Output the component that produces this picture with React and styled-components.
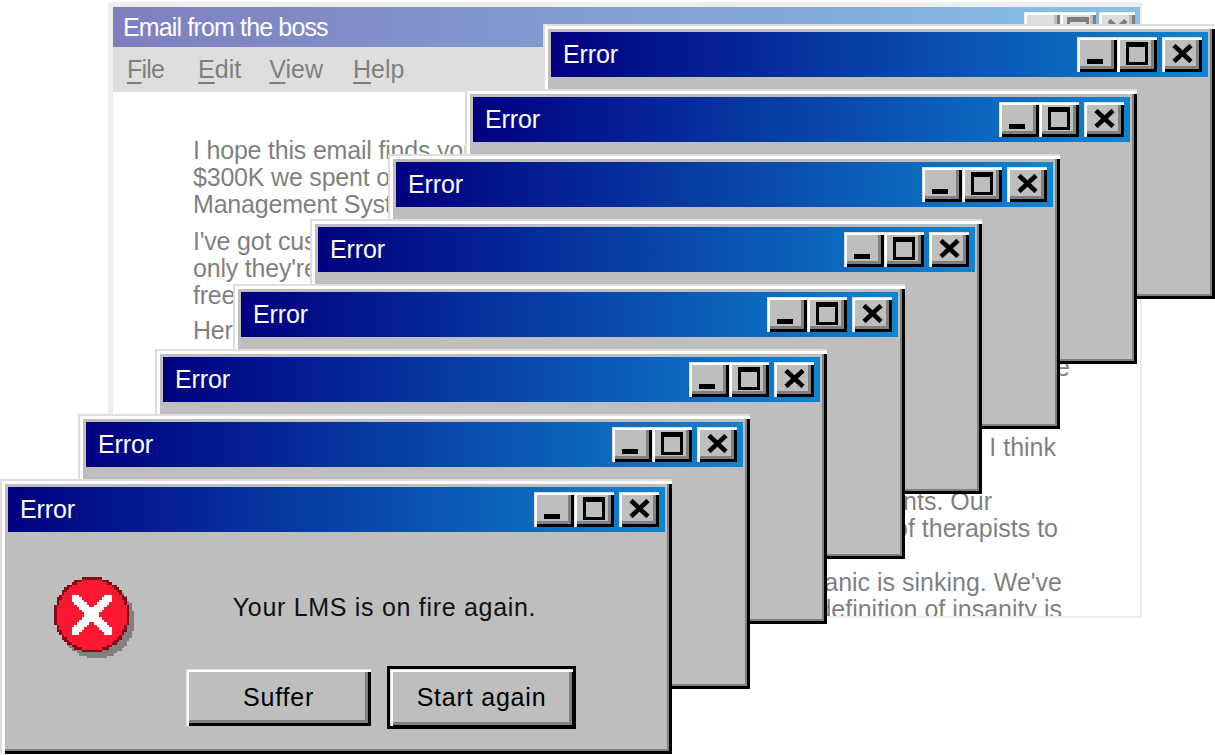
import React from "react";
import styled, { createGlobalStyle } from "styled-components";

const Global = createGlobalStyle`
  html, body {
    margin: 0;
    background: #fff;
  }
  body {
    font-family: "Liberation Sans", Arial, sans-serif;
  }
`;

const Desktop = styled.div`
  position: relative;
  width: 1215px;
  height: 755px;
  overflow: hidden;
  background: #fff;
`;

const Boss = styled.div`
  position: absolute;
  left: 108px;
  top: 2px;
  width: 1034px;
  height: 616px;
  box-sizing: border-box;
  display: flex;
  flex-direction: column;
  padding: 5px 2px 2px 5px;
  background: #dcdcdc;
  opacity: 0.5;
  overflow: hidden;
`;

const Win = styled.div`
  position: absolute;
  left: ${(p) => p.$x}px;
  top: ${(p) => p.$y}px;
  width: 672px;
  height: 275px;
  box-sizing: border-box;
  padding: 8px 7px 0 8px;
  background: #bebebe;
  box-shadow: inset 2px 2px 0 #dedede, inset 5px 5px 0 #fff, inset -3px -3px 0 #000,
    inset -5px -5px 0 #808080;
`;

const TitleBar = styled.div`
  height: ${(p) => p.$h}px;
  display: flex;
  align-items: center;
  justify-content: space-between;
  padding: 0 ${(p) => p.$end}px 0 ${(p) => p.$pad}px;
  background: linear-gradient(90deg, #000080, #1084d0);
`;

const TitleText = styled.span`
  color: #fff;
  font-size: 25px;
  line-height: 30px;
  letter-spacing: ${(p) => p.$track}px;
  margin-bottom: ${(p) => p.$lift || 0}px;
`;

const Controls = styled.div`
  display: flex;
  align-items: center;
  margin-top: ${(p) => p.$drop || 0}px;
`;

const Bevel = styled.button`
  display: flex;
  align-items: center;
  justify-content: center;
  padding: 0;
  border: 0;
  background: #bebebe;
  color: #000;
  font-family: "Liberation Sans", Arial, sans-serif;
  box-shadow: inset 1px 1px 0 #dedede, inset 3px 3px 0 #fff, inset -3px -3px 0 #000,
    inset -6px -6px 0 #808080;
`;

const Ctl = styled(Bevel)`
  width: ${(p) => p.$w}px;
  height: 35px;
  padding-bottom: 2px;
  margin-left: ${(p) => p.$gap || 0}px;
`;

const Menu = styled.div`
  height: 45px;
  display: flex;
  align-items: center;
  padding-left: 14px;
  background: #bebebe;
  font-size: 25px;
  color: #000;
`;

const MenuItem = styled.span`
  margin-left: ${(p) => p.$lead || 0}px;
  letter-spacing: ${(p) => p.$track || 0}px;
  &::first-letter {
    text-decoration: underline;
    text-underline-offset: 4px;
  }
`;

const Mail = styled.div`
  flex: 1;
  background: #fff;
  padding: 45px 70px 0 80px;
  font-size: 25px;
  line-height: 27px;
  color: #000;
  overflow: hidden;
`;

const Para = styled.p`
  margin: 0 0 ${(p) => p.$after}px;
  white-space: nowrap;
  letter-spacing: -0.2px;
`;

const Tail = styled.p`
  margin: 0;
  text-align: right;
  white-space: nowrap;
  padding-right: ${(p) => p.$inset || 0}px;
  margin-top: ${(p) => p.$skip || 0}px;
`;

const Content = styled.div`
  display: flex;
  align-items: flex-start;
  padding: 45px 30px 0 46px;
`;

const Message = styled.div`
  flex: 1;
  margin-top: 15px;
  text-align: center;
  font-size: 25px;
  line-height: 30px;
  color: #111;
  letter-spacing: 0.7px;
`;

const Actions = styled.div`
  display: flex;
  align-items: center;
  gap: 16px;
  margin-top: 8px;
  padding-left: 178px;
`;

const Action = styled(Bevel)`
  width: 185px;
  height: 57px;
  font-size: 25px;
  letter-spacing: 0.8px;
`;

const DefaultAction = styled(Action)`
  width: 189px;
  height: 63px;
  box-shadow: inset 0 0 0 3px #000, inset 4px 4px 0 #dedede, inset 6px 6px 0 #fff,
    inset -4px -4px 0 #000, inset -7px -7px 0 #808080;
`;

const MinIcon = () => (
  <svg width="20" height="26" viewBox="0 0 20 26" shapeRendering="crispEdges">
    <rect x="0" y="18" width="16" height="5" fill="#000" />
  </svg>
);

const MaxIcon = () => (
  <svg width="22" height="23" viewBox="0 0 22 23" shapeRendering="crispEdges">
    <path d="M0 0H22V23H0Z M3 5V20H19V5Z" fill="#000" fillRule="evenodd" />
  </svg>
);

const CloseIcon = () => (
  <svg width="21" height="19" viewBox="0 0 21 19">
    <path d="M2 1.5 L19 17.5 M19 1.5 L2 17.5" stroke="#000" strokeWidth="4.6" fill="none" />
  </svg>
);

const Buttons = ({ w = 40, gap = 5, drop }) => (
  <Controls $drop={drop}>
    <Ctl $w={w}><MinIcon /></Ctl>
    <Ctl $w={w}><MaxIcon /></Ctl>
    <Ctl $w={w} $gap={gap}><CloseIcon /></Ctl>
  </Controls>
);

// the stop icon is chunky pixels in the picture, so it is built on a grid
const cells = [];
for (let row = 0; row < 30; row++) {
  for (let col = 0; col < 30; col++) {
    const dx = col - 14.5;
    const dy = row - 14.5;
    const dist = Math.hypot(dx, dy);
    if (dist > 15) continue;
    let fill = "#fb1830";
    if (dist > 14) fill = "#860a14";
    if (Math.abs(Math.abs(dx) - Math.abs(dy)) < 3 && Math.abs(dx) < 8.5 && Math.abs(dy) < 8.5) fill = "#fff";
    cells.push({ row, col, fill });
  }
}

const StopIcon = () => (
  <svg width="80" height="81" viewBox="0 0 32 32.4" shapeRendering="crispEdges">
    {cells.map((c) => (
      <rect key={"s" + c.row + "-" + c.col} x={c.col + 2} y={c.row + 2.4} width="1" height="1" fill="#808080" />
    ))}
    {cells.map((c) => (
      <rect key={c.row + "-" + c.col} x={c.col} y={c.row} width="1.02" height="1.02" fill={c.fill} />
    ))}
  </svg>
);

const ErrorTitle = () => (
  <TitleBar $h={45} $pad={12} $end={6}>
    <TitleText $track={-0.1} $lift={2}>Error</TitleText>
    <Buttons />
  </TitleBar>
);

const backWindows = [7, 6, 5, 4, 3, 2, 1];

export default function App() {
  return (
    <Desktop>
      <Global />
      <Boss>
        <TitleBar $h={40} $pad={10} $end={5}>
          <TitleText $track={-0.85}>Email from the boss</TitleText>
          <Buttons w={36} gap={3} drop={4} />
        </TitleBar>
        <Menu>
          <MenuItem $track={-0.8}>File</MenuItem>
          <MenuItem $lead={34}>Edit</MenuItem>
          <MenuItem $lead={28}>View</MenuItem>
          <MenuItem $lead={30}>Help</MenuItem>
        </Menu>
        <Mail>
          <Para $after={10}>
            I hope this email finds you
            <br />
            $300K we spent on
            <br />
            Management System
          </Para>
          <Para $after={8}>
            I've got customers
            <br />
            only they're
            <br />
            free
          </Para>
          <Para $after={0}>Here</Para>
          <Tail $skip={10}>e</Tail>
          <Tail $skip={53} $inset={14}>I think</Tail>
          <Tail $skip={27} $inset={78}>ents. Our</Tail>
          <Tail $inset={12}>of therapists to</Tail>
          <Tail $skip={27} $inset={8}>tanic is sinking. We've</Tail>
          <Tail $inset={8}>definition of insanity is</Tail>
        </Mail>
      </Boss>
      {backWindows.map((n) => (
        <Win key={n} $x={Math.round(n * 77.5)} $y={479 - n * 65}>
          <ErrorTitle />
        </Win>
      ))}
      <Win $x={0} $y={479}>
        <ErrorTitle />
        <Content>
          <StopIcon />
          <Message>Your LMS is on fire again.</Message>
        </Content>
        <Actions>
          <Action>Suffer</Action>
          <DefaultAction>Start again</DefaultAction>
        </Actions>
      </Win>
    </Desktop>
  );
}
